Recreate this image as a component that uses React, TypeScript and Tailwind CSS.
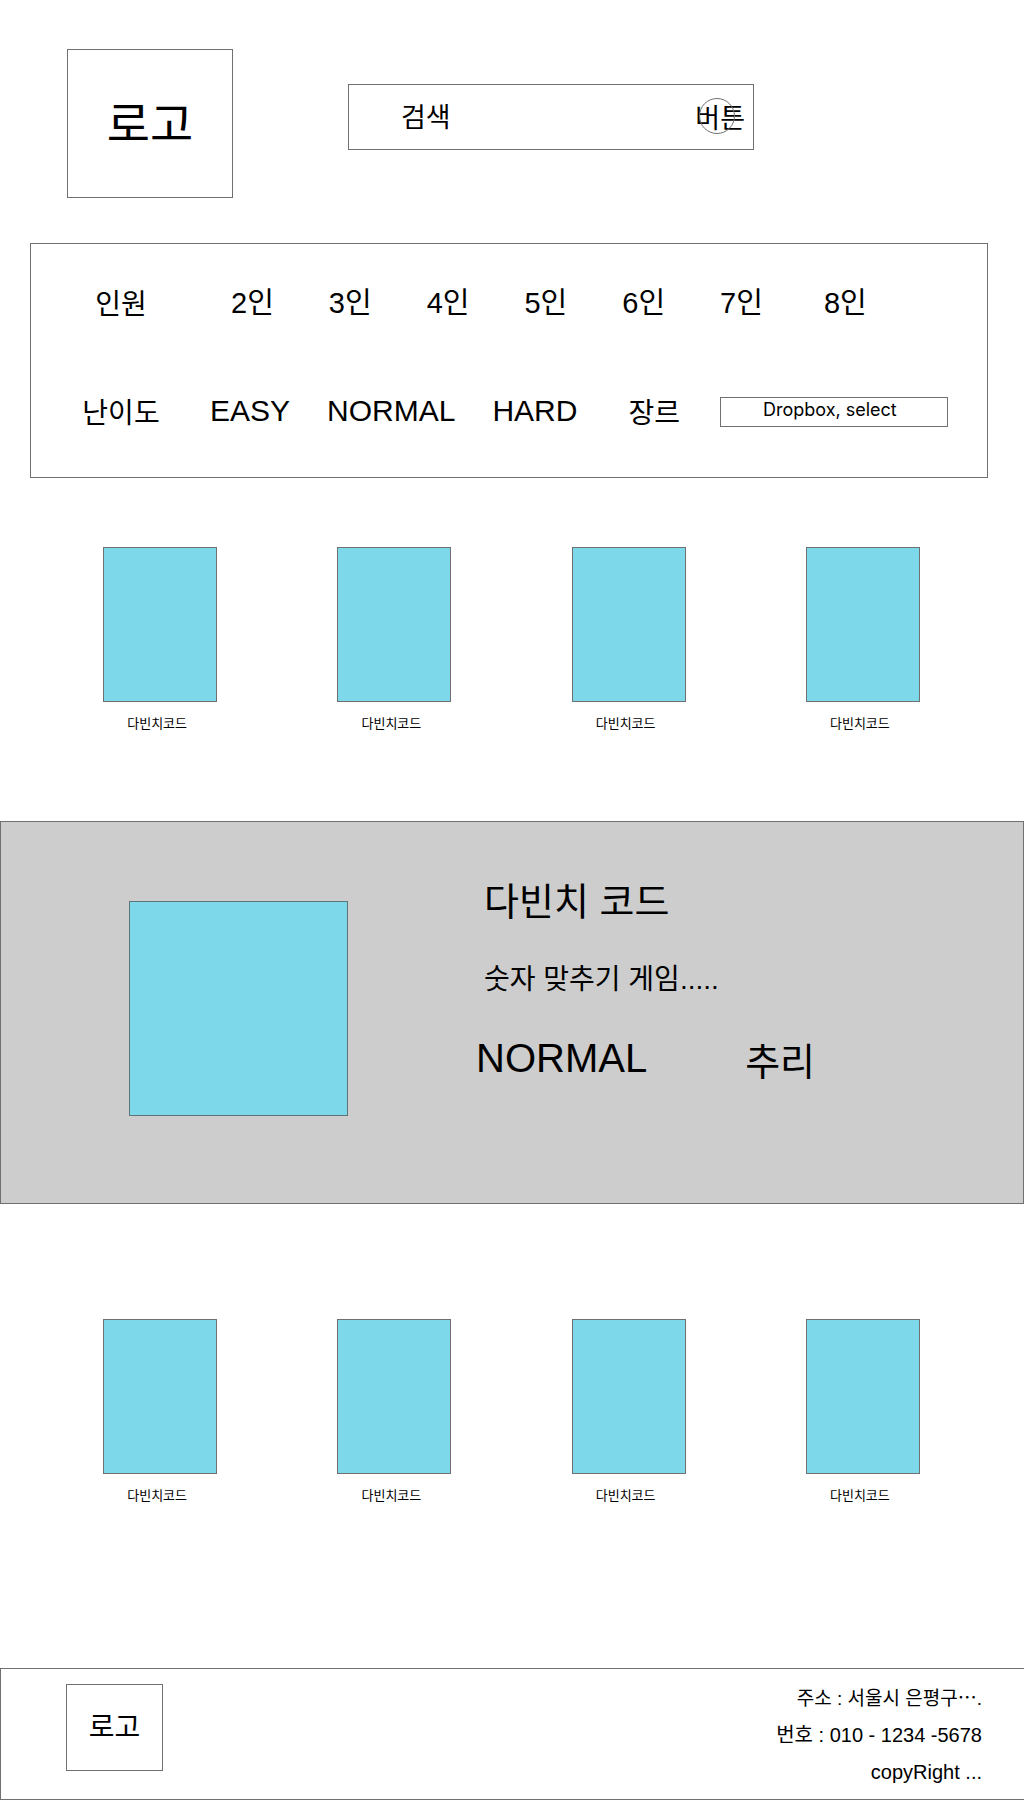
const games = ['다빈치코드', '다빈치코드', '다빈치코드', '다빈치코드'];
const players = ['2인', '3인', '4인', '5인', '6인', '7인'];

function GameGrid() {
  return (
    <ul className="grid grid-cols-4 pr-11 pl-[43px]">
      {games.map((name, i) => (
        <li key={i} className="flex flex-col items-center">
          <a href="#" className="flex flex-col items-center">
            <span className="block h-[155px] w-[114px] border border-[#707070] bg-[#7dd9ea]" />
            <span className="mt-3 pr-1.5 text-[13px] leading-5">{name}</span>
          </a>
        </li>
      ))}
    </ul>
  );
}

export default function App() {
  return (
    <div className="min-h-screen bg-white font-['Liberation_Sans','Noto_Sans_CJK_KR',sans-serif] text-black">
      <header className="flex items-start pt-[49px] pl-[67px]">
        <a
          href="#"
          className="flex h-[149px] w-[166px] shrink-0 items-center justify-center border border-[#707070] pt-1 text-[47px]"
        >
          로고
        </a>
        <form
          className="mt-[35px] mr-[270px] ml-[115px] flex h-[66px] min-w-0 flex-1 items-center border border-[#707070] pr-2 pl-[52px]"
          onSubmit={(e) => e.preventDefault()}
        >
          <input
            type="text"
            aria-label="검색"
            placeholder="검색"
            className="h-full min-w-0 flex-1 pt-0.5 text-[27px] outline-none placeholder:text-black placeholder:opacity-100"
          />
          <button type="submit" className="relative shrink-0 pt-1 text-[27px] leading-9">
            버튼
            <span className="absolute top-px left-1 size-9 rounded-full border border-[#707070]" />
          </button>
        </form>
      </header>

      <main>
        <section className="mt-[45px] mr-9 ml-[30px] border border-[#707070] pt-[39px] pb-[45px]">
          <div className="flex items-center">
            <h2 className="ml-8 w-[116px] pt-1 text-center text-[28px] leading-9">인원</h2>
            <div className="ml-[52px] flex flex-1 gap-[55px] text-[29px] leading-10">
              {players.map((p) => (
                <button key={p} type="button" className="whitespace-nowrap">
                  {p}
                </button>
              ))}
              <button type="button" className="ml-1.5 whitespace-nowrap">8인</button>
            </div>
          </div>
          <div className="mt-[69px] flex items-center">
            <h2 className="ml-8 w-[116px] pt-1 text-center text-[28px] leading-9">난이도</h2>
            <div className="ml-[31px] flex gap-[37px] pb-0.5 text-[30px] leading-9">
              <button type="button">EASY</button>
              <button type="button">NORMAL</button>
              <button type="button">HARD</button>
            </div>
            <label htmlFor="genre" className="ml-[51px] pt-1 text-[28px] leading-9">
              장르
            </label>
            <select
              id="genre"
              className="mr-[39px] ml-10 h-[30px] min-w-0 flex-1 appearance-none border border-[#707070] pr-2 pb-1 pl-[42px] font-['Inter',sans-serif] text-[18px] leading-6"
            >
              <option>Dropbox, select</option>
            </select>
          </div>
        </section>

        <section className="mt-[69px]">
          <GameGrid />
        </section>

        <section className="mt-[87px] flex items-start border border-[#707070] bg-[#cdcdcd] pt-[50px] pb-[87px] pl-32">
          <div className="mt-[29px] h-[215px] w-[219px] border border-[#5f7478] bg-[#7dd9ea]" />
          <div className="ml-32">
            <h2 className="ml-2 text-[38px] leading-[60px]">다빈치 코드</h2>
            <p className="mt-7 ml-2 text-[28px] leading-10">숫자 맞추기 게임.....</p>
            <div className="mt-7 flex items-start gap-[98px] leading-[60px]">
              <span className="text-[40px]">NORMAL</span>
              <span className="pt-1 text-[38px]">추리</span>
            </div>
          </div>
        </section>

        <section className="mt-[115px]">
          <GameGrid />
        </section>
      </main>

      <footer className="mt-[162px] flex items-start justify-between border-y border-l border-[#707070] pt-[11px] pr-[42px] pb-2 pl-[65px]">
        <a
          href="#"
          className="mt-1 flex h-[87px] w-[97px] items-center justify-center border border-[#707070] text-[28px]"
        >
          로고
        </a>
        <address className="flex flex-col text-right text-[20px] leading-[37px] not-italic">
          <span className="text-[19px]">주소 : 서울시 은평구⋯.</span>
          <span>번호 : 010 - 1234 -5678</span>
          <span>copyRight ...</span>
        </address>
      </footer>
    </div>
  );
}
